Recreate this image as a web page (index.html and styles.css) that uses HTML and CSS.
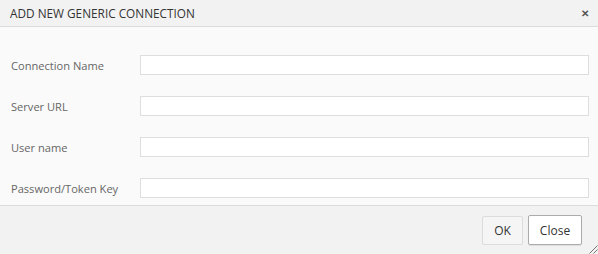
FILE: index.html
```html
<!DOCTYPE html>
<html>
<head>
<meta charset="utf-8">
<link rel="stylesheet" href="styles.css">
</head>
<body>
<div class="dialog">
  <div class="header">
    <span class="title">ADD NEW GENERIC CONNECTION</span>
    <span class="close-x">&#x2715;</span>
  </div>
  <div class="body">
    <div class="row"><label class="label">Connection Name</label><input class="field" type="text"></div>
    <div class="row"><label class="label">Server URL</label><input class="field" type="text"></div>
    <div class="row"><label class="label">User name</label><input class="field" type="text"></div>
    <div class="row"><label class="label">Password/Token Key</label><input class="field" type="password"></div>
  </div>
  <div class="footer">
    <button class="btn btn-ok">OK</button>
    <button class="btn btn-close">Close</button>
    <svg class="grip" width="10" height="10" viewBox="0 0 10 10"><path d="M9.5 1.5 L1.5 9.5 M9.5 5.5 L5.5 9.5" stroke="#777" stroke-width="1" fill="none"/></svg>
  </div>
</div>
</body>
</html>
```
FILE: styles.css
```css
html, body {
  margin: 0;
  padding: 0;
}
body {
  width: 598px;
  height: 254px;
  font-family: "Open Sans", "Noto Sans", sans-serif;
  background: #f2f2f2;
}
.dialog {
  width: 598px;
  height: 254px;
  display: flex;
  flex-direction: column;
  position: relative;
}
.header {
  height: 27px;
  box-sizing: border-box;
  background: #f2f2f2;
  border-bottom: 1px solid #dcdcdc;
  display: flex;
  align-items: center;
  justify-content: space-between;
  padding: 0 9px 1px 10px;
}
.title {
  font-size: 11.8px;
  color: #333;
}
.close-x {
  font-size: 10px;
  font-weight: bold;
  color: #555;
  margin-top: 1px;
}
.body {
  background: #fafafa;
  padding: 28px 9px 7px 11px;
  display: flex;
  flex-direction: column;
  gap: 21px;
  border-bottom: 1px solid #dcdcdc;
}
.row {
  display: flex;
  align-items: center;
  height: 20px;
}
.label {
  width: 129px;
  font-size: 11.1px;
  color: #666;
}
.field {
  flex: 1;
  height: 20px;
  box-sizing: border-box;
  border: 1px solid #dedede;
  background: #fff;
  margin: 0;
  padding: 0 4px;
  outline: none;
}
.footer {
  flex: 1;
  background: #f2f2f2;
  display: flex;
  justify-content: flex-end;
  align-items: flex-start;
  padding: 10px 16px 0 0;
  gap: 5px;
}
.btn {
  font-family: "Open Sans", "Noto Sans", sans-serif;
  font-size: 12px;
  color: #333;
  height: 29px;
  box-sizing: border-box;
  margin: 0;
  border-radius: 2px;
}
.btn-ok {
  width: 41px;
  background: #f5f5f5;
  border: 1px solid #dcdcdc;
}
.btn-close {
  width: 54px;
  height: 30px;
  margin-top: -1px;
  background: #fff;
  border: 1px solid #ababab;
  box-shadow: 0 1px 1px rgba(0,0,0,0.08);
}
.grip {
  position: absolute;
  right: 0;
  bottom: 0;
}
```
